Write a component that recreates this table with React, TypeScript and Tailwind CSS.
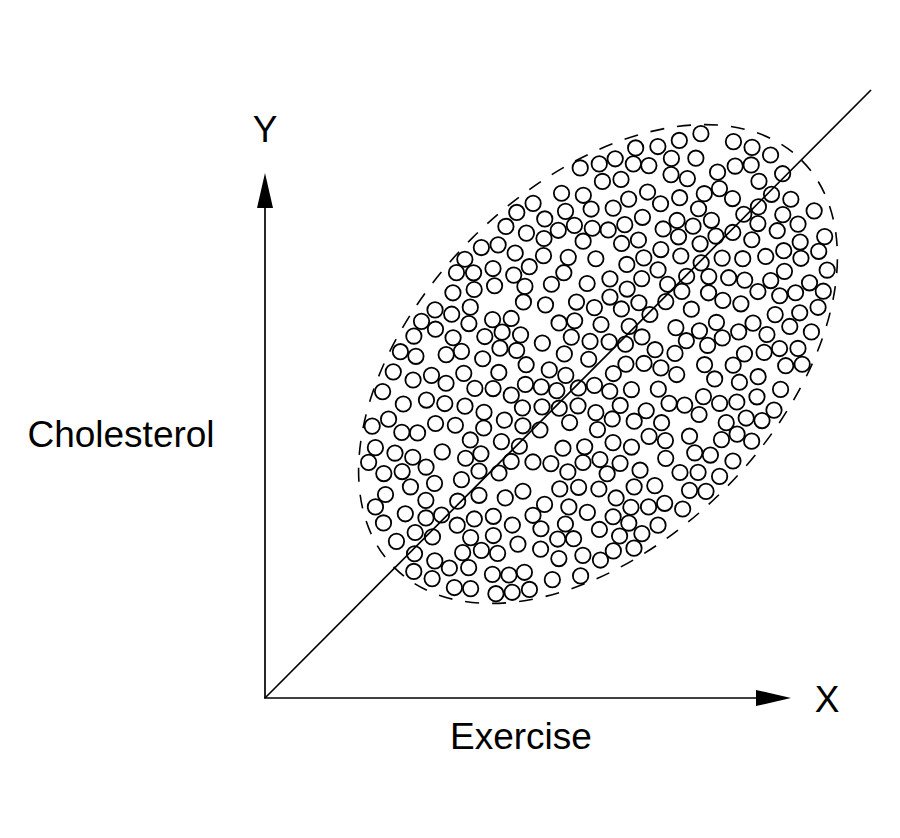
import React, { useMemo } from "react";

function mulberry32(seed: number) {
  let a = seed;
  return function () {
    a |= 0;
    a = (a + 0x6d2b79f5) | 0;
    let t = Math.imul(a ^ (a >>> 15), 1 | a);
    t = (t + Math.imul(t ^ (t >>> 7), 61 | t)) ^ t;
    return ((t ^ (t >>> 14)) >>> 0) / 4294967296;
  };
}

const CX = 598;
const CY = 364;
const RA = 288;
const RB = 178;

function makeDots() {
  const rand = mulberry32(20240611);
  const pts: { x: number; y: number }[] = [];
  const k = Math.SQRT1_2;
  const ia = RA - 8.5;
  const ib = RB - 8.5;
  const minD = 15.6;
  const minD2 = minD * minD;
  for (let i = 0; i < 200000 && pts.length < 372; i++) {
    const u = (rand() * 2 - 1) * ia;
    const v = (rand() * 2 - 1) * ib;
    if ((u / ia) * (u / ia) + (v / ib) * (v / ib) > 1) continue;
    const x = CX + u * k + v * k;
    const y = CY - u * k + v * k;
    let ok = true;
    for (const p of pts) {
      const dx = p.x - x;
      const dy = p.y - y;
      if (dx * dx + dy * dy < minD2) {
        ok = false;
        break;
      }
    }
    if (ok) pts.push({ x, y });
  }
  return pts;
}

export default function App() {
  const dots = useMemo(makeDots, []);
  return (
    <div className="w-[900px] h-[838px] bg-white overflow-hidden">
      <svg width="900" height="838" viewBox="0 0 900 838" className="block">
        <g fontFamily="'Liberation Sans', Arial, sans-serif" fontSize="37" fill="#000">
          <text x="265" y="142" textAnchor="middle">Y</text>
          <text x="827" y="712" textAnchor="middle">X</text>
          <text x="121" y="447" textAnchor="middle">Cholesterol</text>
          <text x="521" y="749" textAnchor="middle">Exercise</text>
        </g>
        <g stroke="#000" strokeWidth="1.7" fill="none">
          <line x1="265" y1="205" x2="265" y2="698" />
          <line x1="264" y1="698" x2="760" y2="698" />
          <line x1="265" y1="698" x2="871" y2="90" />
        </g>
        <polygon points="265,173 257,208 273,208" fill="#000" />
        <polygon points="791,698 756,690 756,706" fill="#000" />
        <ellipse
          cx={CX}
          cy={CY}
          rx={RA}
          ry={RB}
          transform={`rotate(-45 ${CX} ${CY})`}
          fill="none"
          stroke="#000"
          strokeWidth="1.6"
          strokeDasharray="14 13"
        />
        <g stroke="#000" strokeWidth="1.8" fill="none">
          {dots.map((d, i) => (
            <circle key={i} cx={d.x} cy={d.y} r="7.7" />
          ))}
        </g>
      </svg>
    </div>
  );
}
